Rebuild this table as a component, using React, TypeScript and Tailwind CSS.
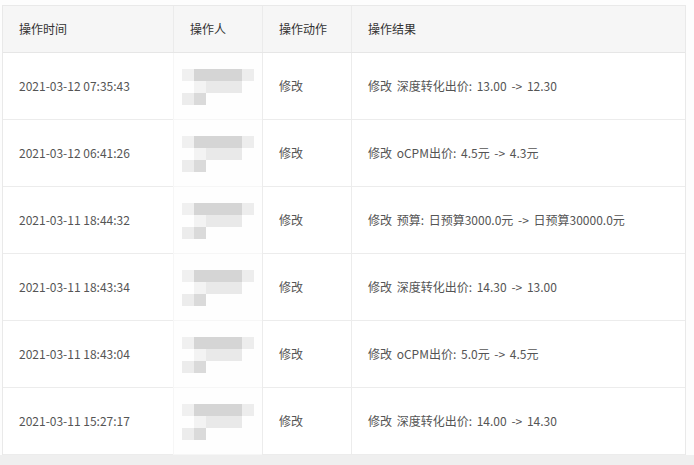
import React from "react";

const rows = [
  { time: "2021-03-12 07:35:43", action: "修改", result: "修改 深度转化出价: 13.00 -> 12.30" },
  { time: "2021-03-12 06:41:26", action: "修改", result: "修改 oCPM出价: 4.5元 -> 4.3元" },
  { time: "2021-03-11 18:44:32", action: "修改", result: "修改 预算: 日预算3000.0元 -> 日预算30000.0元" },
  { time: "2021-03-11 18:43:34", action: "修改", result: "修改 深度转化出价: 14.30 -> 13.00" },
  { time: "2021-03-11 18:43:04", action: "修改", result: "修改 oCPM出价: 5.0元 -> 4.5元" },
  { time: "2021-03-11 15:27:17", action: "修改", result: "修改 深度转化出价: 14.00 -> 14.30" },
];

const font = { fontFamily: '"Noto Sans CJK SC", "Liberation Sans", sans-serif' };

// masked operator name
const Masked = () => (
  <div className="flex flex-col pt-[16px] pl-[8px] blur-[0.6px]">
    <div className="flex h-[12px]">
      <div className="w-[12px] bg-[#f0f0f0]" />
      <div className="w-[48px] bg-[#d5d5d5]" />
      <div className="w-[12px] bg-[#ededed]" />
    </div>
    <div className="flex h-[12px]">
      <div className="w-[12px]" />
      <div className="w-[12px] bg-[#f3f3f3]" />
      <div className="w-[36px] bg-[#e9e9e9]" />
    </div>
    <div className="flex h-[12px]">
      <div className="w-[12px] bg-[#ececec]" />
      <div className="w-[12px] bg-[#dadada]" />
    </div>
  </div>
);

export default function App() {
  return (
    <div className="w-[694px] h-[465px] bg-[#fdfdfd] flex flex-col overflow-hidden" style={font}>
      <div className="pt-[5px] pl-[2px] pr-[8px] flex-1">
        <div className="border-t border-l border-r border-[#e9e9e9] text-[12px]">
          <div className="grid grid-cols-[170px_89px_89px_1fr] h-[47px] bg-[#f6f6f6] border-b border-[#e6e6e6] text-[#333]">
            <div className="flex items-center pl-4">操作时间</div>
            <div className="flex items-center pl-4 border-l border-[#ebebeb]">操作人</div>
            <div className="flex items-center pl-4 border-l border-[#ebebeb]">操作动作</div>
            <div className="flex items-center pl-4 border-l border-[#ebebeb]">操作结果</div>
          </div>
          {rows.map((r, i) => (
            <div key={i} className="grid grid-cols-[170px_89px_89px_1fr] h-[67px] bg-white text-[#555]">
              <div className="flex items-center pl-4 border-b border-[#ececec]">{r.time}</div>
              <div className="border-l border-b border-[#f6f6f6] bg-[#fefefe]">
                <Masked />
              </div>
              <div className="flex items-center pl-4 border-l border-b border-[#ececec]">{r.action}</div>
              <div className="flex items-center pl-4 border-l border-b border-[#ececec] [word-spacing:2px]">{r.result}</div>
            </div>
          ))}
        </div>
      </div>
      <div className="h-[12px] bg-[#efefef]" />
    </div>
  );
}
